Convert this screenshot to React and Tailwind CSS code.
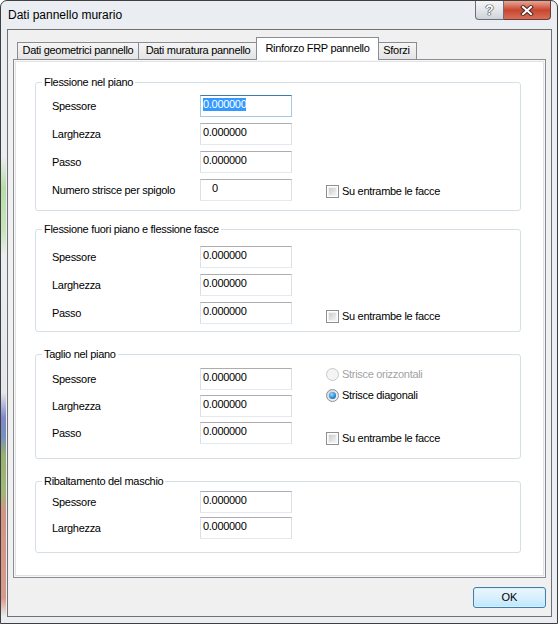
import React from 'react';

const Field = ({ value = '0.000000', focused, indent }) => (
  <div
    className={`w-[92px] h-[22px] border bg-white pt-[2px] ${
      focused
        ? 'border-[#a4c9e3] border-t-[#3d7bad]'
        : 'border-[#dbdfe6] border-t-[#abadb3] border-b-[#e3e9ef]'
    } ${indent ? 'pl-[11px]' : 'pl-[2px]'}`}
  >
    <span className={`block w-fit leading-[13px] ${focused ? 'bg-[#3399ff] text-white' : ''}`}>{value}</span>
  </div>
);

const Row = ({ label, ...rest }) => (
  <div className="flex items-center h-[22px]">
    <span className="w-[148px]">{label}</span>
    <Field {...rest} />
  </div>
);

const Check = ({ className = '' }) => (
  <div className={`flex items-center h-[15px] gap-[3px] ${className}`}>
    <div className="w-[13px] h-[13px] border border-[#8f8f8f] bg-white p-[1px]">
      <div className="w-full h-full border border-[#f2f2f2] bg-gradient-to-br from-[#c9cdd3] to-[#f3f3f3]" />
    </div>
    <span>Su entrambe le facce</span>
  </div>
);

const Radio = ({ label, checked, disabled, className = '' }) => (
  <div className={`flex items-center h-[15px] gap-[3px] ${className}`}>
    <div
      className={`w-[13px] h-[13px] rounded-full border flex items-center justify-center ${
        disabled ? 'border-[#c8c8c8] bg-[#f4f4f4]' : 'border-[#8f8f8f] bg-gradient-to-br from-[#d0d4da] to-[#f6f6f6]'
      }`}
    >
      {checked && (
        <div className="w-[7px] h-[7px] rounded-full bg-[radial-gradient(circle_at_40%_35%,#9fdcff_0%,#2a8ad4_55%,#145a9c_100%)]" />
      )}
    </div>
    <span className={disabled ? 'text-[#a3a3a3]' : ''}>{label}</span>
  </div>
);

const Group = ({ title, className = '', children }) => (
  <div className={`relative ml-[21px] w-[486px] rounded-[3px] border border-[#d5dfe5] flex ${className}`}>
    <span className="absolute -top-[7px] left-[6px] bg-white px-[2px] leading-[13px]">{title}</span>
    {children}
  </div>
);

const Tab = ({ label, width, selected }) =>
  selected ? (
    <div
      className={`${width} h-[23px] -mb-[1px] -mx-[2px] relative z-10 bg-white border border-b-0 border-[#898c95] flex items-center justify-center pb-[2px]`}
    >
      {label}
    </div>
  ) : (
    <div
      className={`${width} h-[17px] border border-b-0 border-[#898c95] bg-gradient-to-b from-[#f5f5f5] to-[#e4e4e4] flex items-center justify-center pb-[1px]`}
    >
      {label}
    </div>
  );

export default function App() {
  return (
    <div className="w-[558px] h-[624px] overflow-hidden rounded-t-[7px] border border-[#3f3f3f] bg-[#eaeef2] bg-[linear-gradient(to_bottom,#eaeef2_0%,#eaeef2_25%,#b8dca8_30%,#c8e4bc_37%,#eaeef2_41%,#e4e6ea_63%,#8088cc_67%,#7890c0_70%,#98b070_73%,#a0b878_79%,#d49484_82%,#d89a8a_96%,#eaeef2_99%)] bg-no-repeat bg-[length:5px_100%] font-['Liberation_Sans',Arial,sans-serif] text-[11px] tracking-[-0.3px] text-black">
      {/* title bar */}
      <div className="h-[28px] flex items-start justify-between">
        <span className="ml-[7px] mt-[6px] text-[12px] tracking-normal leading-[16px]">Dati pannello murario</span>
        <div className="flex mr-[6px]">
          <div className="w-[29px] h-[19px] rounded-bl-[4px] border border-t-0 border-[#6b6f75] bg-gradient-to-b from-[#f4f5f7] via-[#e3e6ea] to-[#cfd3d9] flex items-center justify-center">
            <span className="text-[14px] font-bold leading-none text-white [text-shadow:0_0_1px_#222,0_0_1px_#222,0_0_1px_#222]">?</span>
          </div>
          <div className="w-[47px] h-[19px] rounded-br-[4px] border border-l-0 border-t-0 border-[#6b3a35] bg-gradient-to-b from-[#e8a595] via-[#c9452f] to-[#d66e58] flex items-center justify-center">
            <svg width="14" height="11" viewBox="0 0 14 11">
              <path d="M3 2 L11 9 M11 2 L3 9" stroke="#4a2a26" strokeWidth="4" strokeLinecap="square" />
              <path d="M3 2 L11 9 M11 2 L3 9" stroke="#ffffff" strokeWidth="2" strokeLinecap="square" />
            </svg>
          </div>
        </div>
      </div>

      {/* client area */}
      <div className="ml-[6px] w-[545px] h-[588px] border border-[#707070] bg-[#f0f0f0] pt-[7px]">
        <div className="ml-[5px] w-[533px]">
          <div className="h-[22px] flex items-end pl-[4px]">
            <Tab label="Dati geometrici pannello" width="w-[122px]" />
            <Tab label="Dati muratura pannello" width="w-[119px] border-l-0" />
            <Tab label="Rinforzo FRP pannello" width="w-[123px]" selected />
            <Tab label="Sforzi" width="w-[40px] border-l-0" />
          </div>
          <div className="h-[519px] border border-[#898c95] bg-white shadow-[inset_0_0_0_1px_#f7f7f7,inset_0_0_0_2px_#e2e2e2] pt-[22px]">
            <Group title="Flessione nel piano" className="pt-[12px] pb-[9px]">
              <div className="pl-[16px] flex flex-col gap-[6px]">
                <Row label="Spessore" focused />
                <Row label="Larghezza" />
                <Row label="Passo" />
                <Row label="Numero strisce per spigolo" value="0" indent />
              </div>
              <div className="ml-[34px] flex flex-col">
                <Check className="mt-[89px]" />
              </div>
            </Group>

            <Group title="Flessione fuori piano e flessione fasce" className="mt-[18px] pt-[16px] pb-[7px]">
              <div className="pl-[16px] flex flex-col gap-[6px]">
                <Row label="Spessore" />
                <Row label="Larghezza" />
                <Row label="Passo" />
              </div>
              <div className="ml-[34px] flex flex-col">
                <Check className="mt-[63px]" />
              </div>
            </Group>

            <Group title="Taglio nel piano" className="mt-[22px] pt-[13px] pb-[12px]">
              <div className="pl-[16px] flex flex-col gap-[5px]">
                <Row label="Spessore" />
                <Row label="Larghezza" />
                <Row label="Passo" />
              </div>
              <div className="ml-[34px] flex flex-col">
                <Radio label="Strisce orizzontali" disabled className="-mt-[1px]" />
                <Radio label="Strisce diagonali" checked className="mt-[6px]" />
                <Check className="mt-[28px]" />
              </div>
            </Group>

            <Group title="Ribaltamento del maschio" className="mt-[22px] pt-[9px] pb-[13px]">
              <div className="pl-[16px] flex flex-col gap-[4px]">
                <Row label="Spessore" />
                <Row label="Larghezza" />
              </div>
            </Group>
          </div>
          <div className="flex justify-end mt-[9px]">
            <button className="w-[73px] h-[21px] rounded-[3px] border border-[#3c7fb1] bg-gradient-to-b from-[#eaf6fd] via-[#d9f0fc] to-[#bee6fd] shadow-[inset_0_0_0_1px_#d8effb] flex items-center justify-center tracking-normal">
              OK
            </button>
          </div>
        </div>
      </div>
    </div>
  );
}
